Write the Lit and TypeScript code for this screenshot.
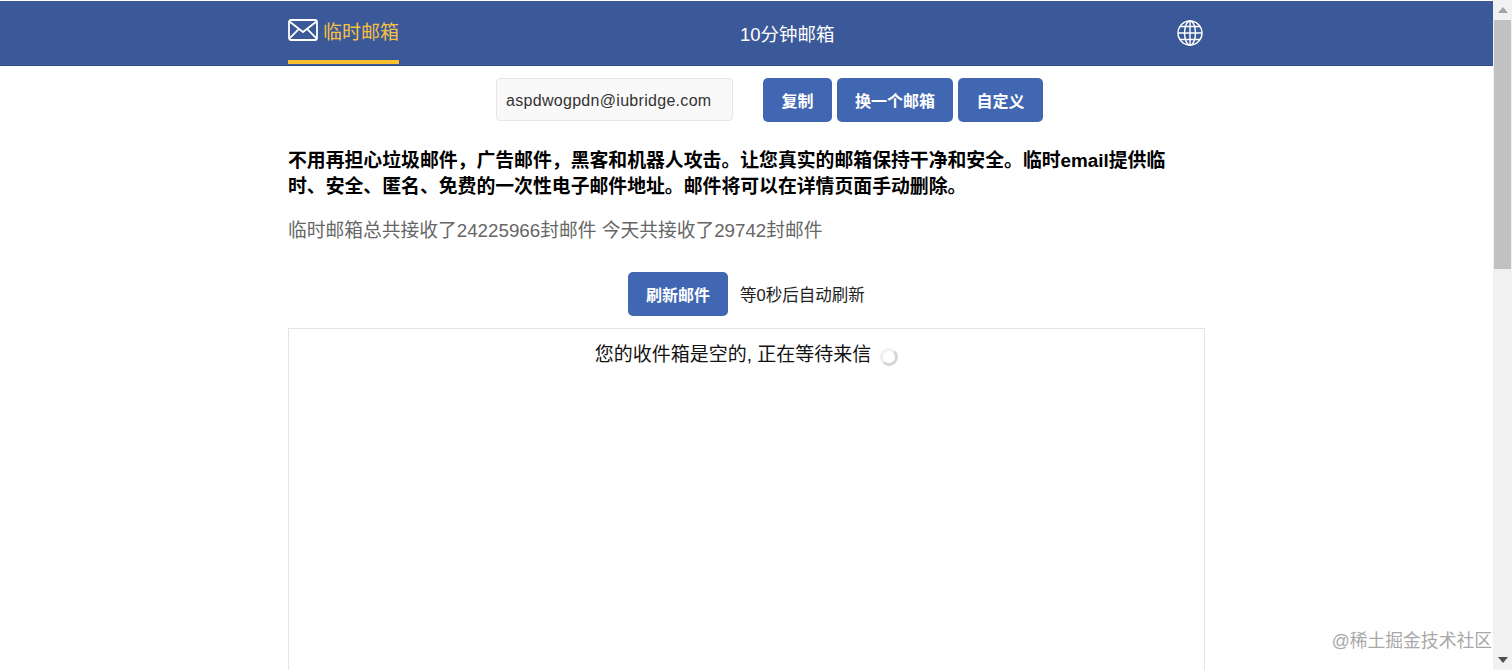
import { LitElement, html, css } from 'lit';
import { customElement } from 'lit/decorators.js';

@customElement('app-root')
export class AppRoot extends LitElement {
  static styles = css`
    :host {
      display: flex;
      width: 1512px;
      height: 670px;
      overflow: hidden;
      position: relative;
      background: #fff;
      color: #000;
      font-family: "Liberation Sans", "Noto Sans CJK SC", sans-serif;
    }
    .page {
      width: 1493px;
      flex: none;
    }
    .header {
      height: 64px;
      margin-top: 1px;
      background: #3b5998;
      border-bottom: 1px solid #2f4f8f;
      box-sizing: content-box;
    }
    .nav {
      width: 917px;
      height: 64px;
      margin: 0 auto;
      display: flex;
      align-items: stretch;
    }
    .brand {
      display: flex;
      align-items: center;
      gap: 5px;
      width: 111px;
      height: 63px;
      box-sizing: border-box;
      border-bottom: 4px solid #fbc02d;
      padding-bottom: 1px;
      color: #f5c044;
      font-size: 19px;
      white-space: nowrap;
    }
    .center {
      margin-left: 341px;
      width: 95px;
      display: flex;
      align-items: center;
      color: #fff;
      font-size: 18.5px;
      white-space: nowrap;
    }
    .globe {
      margin-left: 342px;
      display: flex;
      align-items: center;
    }
    .container {
      width: 917px;
      margin: 0 auto;
    }
    .mailrow {
      display: flex;
      margin: 12px 0 0 208px;
      height: 44px;
    }
    .email {
      width: 237px;
      height: 43px;
      box-sizing: border-box;
      border: 1px solid #e6e6e6;
      border-radius: 4px;
      background: #f9f9f9;
      padding: 2px 0 0 9px;
      display: flex;
      align-items: center;
      font-size: 16px;
      letter-spacing: 0.3px;
      color: #333;
      margin-right: 30px;
    }
    .btn {
      height: 44px;
      box-sizing: border-box;
      border-radius: 5px;
      background: #4267b2;
      color: #fff;
      font-size: 16px;
      font-weight: 700;
      display: flex;
      align-items: center;
      justify-content: center;
      margin-right: 5px;
    }
    .intro {
      margin: 26px 30px 0 0;
      font-size: 18.85px;
      font-weight: 700;
      line-height: 26px;
    }
    .stats {
      margin-top: 18px;
      font-size: 18.75px;
      line-height: 26px;
      color: #666;
    }
    .refresh {
      display: flex;
      align-items: center;
      margin: 28px 0 0 340px;
      height: 44px;
    }
    .refresh span {
      margin-left: 7px;
      font-size: 16.5px;
      color: #222;
    }
    .inbox {
      margin-top: 12px;
      height: 400px;
      box-sizing: border-box;
      border: 1px solid #e5e5e5;
      display: flex;
      justify-content: center;
      align-items: flex-start;
      padding-top: 13px;
      font-size: 19px;
      line-height: 26px;
      color: #111;
    }
    .spinner {
      width: 12px;
      height: 12px;
      border: 3px solid #d6d6d6;
      border-top-color: #f2f2f2;
      border-left-color: #f0f0f0;
      border-radius: 50%;
      margin: 6px 0 0 9px;
    }
    .scrollbar {
      position: absolute;
      top: 0;
      right: 0;
      width: 19px;
      height: 670px;
      background: #f1f1f1;
      display: flex;
      flex-direction: column;
      align-items: center;
    }
    .arrow {
      height: 20px;
      flex: none;
      display: flex;
      align-items: center;
      justify-content: center;
    }
    .thumb {
      width: 17px;
      height: 249px;
      background: #c1c1c1;
      flex: none;
    }
    .spacer {
      flex: 1;
    }
    .mark {
      position: absolute;
      right: 20px;
      top: 631px;
      font-size: 17.8px;
      line-height: 20px;
      color: #a8a8a8;
      white-space: nowrap;
    }
  `;

  render() {
    return html`
      <div class="page">
        <div class="header">
          <div class="nav">
            <div class="brand">
              <svg width="30" height="22" viewBox="0 0 30 22" fill="none" stroke="#fff" stroke-width="1.8">
                <rect x="1" y="1" width="28" height="20" rx="2"></rect>
                <path d="M1.5 2.5 15 13 28.5 2.5M1.5 19.5 11 9.8M28.5 19.5 19 9.8"></path>
              </svg>
              临时邮箱
            </div>
            <div class="center">10分钟邮箱</div>
            <div class="globe">
              <svg width="26" height="26" viewBox="0 0 26 26" fill="none" stroke="#fff" stroke-width="1.4">
                <circle cx="13" cy="13" r="12"></circle>
                <ellipse cx="13" cy="13" rx="5.5" ry="12"></ellipse>
                <path d="M13 1v24M1 13h24M3 6.5h20M3 19.5h20"></path>
              </svg>
            </div>
          </div>
        </div>
        <div class="container">
          <div class="mailrow">
            <div class="email">aspdwogpdn@iubridge.com</div>
            <div class="btn" style="width:69px">复制</div>
            <div class="btn" style="width:116px">换一个邮箱</div>
            <div class="btn" style="width:85px">自定义</div>
          </div>
          <div class="intro">不用再担心垃圾邮件，广告邮件，黑客和机器人攻击。让您真实的邮箱保持干净和安全。临时email提供临时、安全、匿名、免费的一次性电子邮件地址。邮件将可以在详情页面手动删除。</div>
          <div class="stats">临时邮箱总共接收了24225966封邮件 今天共接收了29742封邮件</div>
          <div class="refresh">
            <div class="btn" style="width:100px">刷新邮件</div>
            <span>等0秒后自动刷新</span>
          </div>
          <div class="inbox">
            您的收件箱是空的, 正在等待来信
            <div class="spinner"></div>
          </div>
        </div>
      </div>
      <div class="scrollbar">
        <div class="arrow">
          <svg width="10" height="6" viewBox="0 0 10 6"><path d="M5 0 10 6H0z" fill="#a3a3a3"></path></svg>
        </div>
        <div class="thumb"></div>
        <div class="spacer"></div>
        <div class="arrow">
          <svg width="10" height="6" viewBox="0 0 10 6"><path d="M0 0H10L5 6z" fill="#505050"></path></svg>
        </div>
      </div>
      <div class="mark">@稀土掘金技术社区</div>
    `;
  }
}
